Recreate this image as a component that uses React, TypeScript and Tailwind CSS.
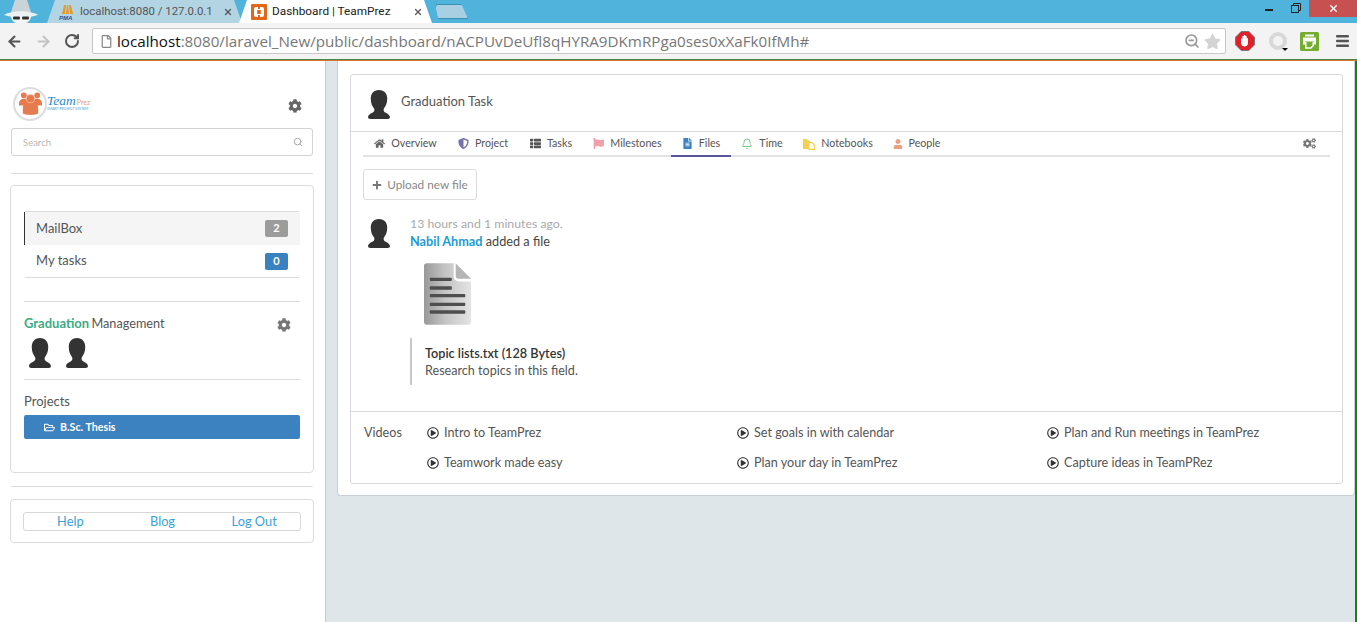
import React from "react";
import { Bell, Search, ArrowLeft, ArrowRight, RotateCw, ZoomOut, X } from "lucide-react";
import { FaHome, FaCog, FaCogs, FaPlus, FaFlag, FaUser, FaRegFolderOpen, FaRegPlayCircle, FaThList, FaFileAlt, FaShieldAlt, FaRegFile, FaStar } from "react-icons/fa";

function Avatar({ className = "" }: { className?: string }) {
  return (
    <svg viewBox="0 0 24 30" preserveAspectRatio="none" className={className}>
      <path fill="#333" d="M12 0C18 0 21 4 21 9C21 14 19 17 17.5 19C16.7 20.5 17 22 18 22.8C19.5 24 23.5 25 24 28C24 29.3 23 30 21.5 30L2.5 30C1 30 0 29.3 0 28C0.5 25 4.500 24 6 22.8C7 22 7.300 20.500 6.500 19C5 17 3 14 3 9C3 4 6 0 12 0Z" />
    </svg>
  );
}

function Tab({ active, title, icon, width }: { active?: boolean; title: string; icon: React.ReactNode; width: string }) {
  return (
    <div className={`flex items-center h-[23px] pl-2 pr-2 ${width} ${active ? "bg-white" : "bg-[#b3d4e3]"} [clip-path:polygon(0_100%,8px_0,calc(100%-8px)_0,100%_100%)]`}>
      <span className="w-4 h-4 shrink-0 ml-1 mr-[5px] flex items-center justify-center">{icon}</span>
      <span className={`whitespace-nowrap overflow-hidden flex-1 ${active ? "text-[11.800px] text-[#222]" : "text-[11.400px] text-[#555]"}`} style={{ fontFamily: "Roboto, sans-serif" }}>{title}</span>
      <X size={10} strokeWidth={3} className="text-[#555] shrink-0 ml-1 mr-[1px]" />
    </div>
  );
}

function NavTab({ icon, label, active, w }: { icon: React.ReactNode; label: string; active?: boolean; w: string }) {
  return (
    <div className={`flex items-center justify-center gap-[6px] h-[25px] ${w} text-[10.7px] text-[#555] -mb-[2px] border-b-2 ${active ? "border-[#5a5296]" : "border-transparent"}`}>
      {icon}
      <span>{label}</span>
    </div>
  );
}

function VideoLink({ label }: { label: string }) {
  return (
    <div className="flex items-center gap-[5px] h-[30px] text-[12.6px] text-[#555]">
      <FaRegPlayCircle size={12} className="text-[#333] shrink-0" />
      <span>{label}</span>
    </div>
  );
}

function Logo() {
  return (
    <div className="flex items-center h-[36px] -mt-[3px]">
      <div className="w-[34px] h-[34px] rounded-full border-2 border-[#ddd] flex items-center justify-center">
        <svg viewBox="0 0 26 24" className="w-[25px] h-[23px]">
          <g fill="#e67b4d">
            <circle cx="6" cy="3.500" r="3" />
            <circle cx="20" cy="3.500" r="3" />
            <path d="M1 12c0-3 2-5 5-5h14c3 0 5 2 5 5v2H1z" />
            <circle cx="13" cy="7" r="4.300" stroke="#f6c7ad" strokeWidth="0.800" />
            <path d="M5 16c0-3 3-4 8-4s8 1 8 4v6c0 1-3 2-8 2s-8-1-8-2z" />
          </g>
        </svg>
      </div>
      <div className="ml-0 -mt-[2px] flex flex-col">
        <div className="flex items-baseline leading-none">
          <span className="text-[13.500px] italic text-[#2a8ad0]" style={{ fontFamily: "'Liberation Serif', serif" }}>Team</span>
          <span className="text-[7px] ml-[1px] text-[#e8a070]">Prez</span>
        </div>
        <span className="text-[3.500px] leading-none text-[#4a9ad8] whitespace-nowrap">SMART PROJECT SYSTEM</span>
      </div>
    </div>
  );
}

function FileIcon() {
  return (
    <svg viewBox="0 0 50 64" className="w-[48px] h-[64px]">
      <defs>
        <linearGradient id="fg" x1="0" x2="1" y1="0" y2="0">
          <stop offset="0" stopColor="#999" />
          <stop offset="0.45" stopColor="#c4c4c4" />
          <stop offset="1" stopColor="#e4e4e4" />
        </linearGradient>
      </defs>
      <path fill="url(#fg)" d="M3 0h28l18 18v43a3 3 0 0 1-3 3H3a3 3 0 0 1-3-3V3a3 3 0 0 1 3-3z" />
      <path fill="#fff" d="M31 0v14a5 5 0 0 0 5 5h13v-2L33 0z" />
      <path fill="#b5b5b5" d="M33 0v13a3 3 0 0 0 3 3h13z" />
      <g fill="#4e4e4e">
        <rect x="6" y="15" width="23" height="3.500" rx="1" />
        <rect x="6" y="24" width="23" height="3.500" rx="1" />
        <rect x="6" y="32" width="37" height="3.500" rx="1" />
        <rect x="6" y="41" width="37" height="3.500" rx="1" />
        <rect x="6" y="49" width="37" height="3.500" rx="1" />
      </g>
    </svg>
  );
}

export default function App() {
  return (
    <div className="w-[1357px] h-[622px] overflow-hidden flex flex-col bg-[#dfe6e9] text-[#444]" style={{ fontFamily: "Lato, sans-serif" }}>
      {/* tab strip */}
      <div className="h-[23px] shrink-0 bg-[#4fb3dc] flex items-end relative">
        <div className="w-[51px] h-[23px] shrink-0 flex items-center justify-start overflow-hidden pl-[2px]">
          <svg viewBox="0 0 38 24" className="w-[38px] h-[24px]">
            <path fill="#c9d3d8" d="M9 12 L13 0 h12 l4 12z" />
            <path fill="#eef1f2" d="M2 15 C10 10 28 10 36 15 L28 17H10z" />
            <path fill="#f2f4f5" d="M9 16h20c0 5-4 8-10 8S9 21 9 16z" />
            <rect x="11" y="16.500" width="7" height="3" rx="1" fill="#333" />
            <rect x="20" y="16.500" width="7" height="3" rx="1" fill="#333" />
          </svg>
        </div>
        <div className="flex items-end -ml-[4px]">
          <Tab width="w-[195px]" title="localhost:8080 / 127.0.0.1" icon={
            <svg viewBox="0 0 16 16" className="w-4 h-4"><path fill="#e69a1f" d="M3 10 5 1h2L6 10zM7 10l1-9h1l1 9zM11 10 10 1h2l2 9z" /><text x="0" y="15.500" fontSize="6" fontStyle="italic" fontWeight="700" fill="#33508a" fontFamily="Liberation Sans">PMA</text></svg>
          } />
          <div className="-ml-[3px]">
            <Tab active width="w-[193px]" title="Dashboard | TeamPrez" icon={
              <svg viewBox="0 0 16 16" className="w-4 h-4">
                <rect width="16" height="16" rx="1" fill="#e2671b" />
                <rect x="3" y="3" width="10" height="10" rx="2" fill="#fff" />
                <rect x="6.200" y="6" width="3.600" height="4" fill="#e2671b" />
                <rect x="7" y="3" width="2" height="2" fill="#e2671b" />
                <rect x="7" y="11" width="2" height="2" fill="#e2671b" />
              </svg>
            } />
          </div>
          <div className="ml-[3px] w-[33px] h-[15px] mb-[4px] bg-[#a9d0e2] border border-[#3d90b2] rounded-t-[3px] [clip-path:polygon(0_0,80%_0,100%_100%,10%_100%)]" />
        </div>
        <div className="ml-auto flex items-start self-start h-[17px]">
          <div className="w-[26px] h-[15px] flex items-center justify-center"><span className="w-[8px] h-[2px] mt-[4px] bg-[#222]" /></div>
          <div className="w-[27px] h-[15px] flex items-center justify-center">
            <svg viewBox="0 0 10 10" className="w-[10px] h-[10px]" fill="none" stroke="#222" strokeWidth="1">
              <rect x="0.500" y="2.500" width="7" height="7" />
              <path d="M2.500 2.500v-2h7v7h-2" />
            </svg>
          </div>
          <div className="w-[48px] h-[17px] bg-[#c75050] flex items-center justify-center"><X size={11} strokeWidth={3} className="text-white" /></div>
        </div>
      </div>
      {/* toolbar */}
      <div className="h-[37px] shrink-0 bg-[#f3f3f3] flex items-center border-b border-[#3f8a3a]">
        <ArrowLeft size={17} strokeWidth={3} className="text-[#555] ml-[6px]" />
        <ArrowRight size={17} strokeWidth={3} className="text-[#c4c4c4] ml-[12px]" />
        <RotateCw size={16} strokeWidth={3} className="text-[#555] ml-[12px]" />
        <div className="ml-[12px] w-[1134px] h-[26px] bg-white border border-[#c8c8c8] rounded-[2px] flex items-center pl-[7px] pr-[4px]">
          <FaRegFile size={13} className="text-[#888] shrink-0" />
          <span className="ml-[4px] text-[15.200px] whitespace-nowrap" style={{ fontFamily: "'Open Sans', sans-serif" }}>
            <span className="text-[#111]">localhost</span><span className="text-[#777]">:8080/laravel_New/public/dashboard/nACPUvDeUfl8qHYRA9DKmRPga0ses0xXaFk0IfMh#</span>
          </span>
          <span className="ml-auto flex items-center gap-[4px] shrink-0">
            <ZoomOut size={16} strokeWidth={2.500} className="text-[#999]" />
            <FaStar size={17} className="text-[#d4d4d4]" />
          </span>
        </div>
        <svg viewBox="0 0 20 20" className="ml-[9px] w-[20px] h-[20px] shrink-0">
          <path fill="#e1202a" stroke="#777" strokeWidth="1" d="M6.200 .5h7.600l5.700 5.700v7.600l-5.700 5.700H6.200L.5 13.800V6.200z" />
          <path fill="#fff" d="M6 8c0-1 1.400-1 1.400 0V5.500c0-1 1.400-1 1.400 0V4.500c0-1 1.500-1 1.500 0v1c0-1 1.400-1 1.400 0v2c0-.8 1.300-.8 1.300 0v4.500c0 2-1.500 3.500-3.500 3.500S6 14 6 12z" />
        </svg>
        <span className="ml-[14px] w-[18px] h-[18px] rounded-full border-[4px] border-[#d8d8d8] shrink-0 relative">
          <span className="absolute -right-[5px] -bottom-[5px] w-0 h-0 border-x-[3px] border-x-transparent border-t-[3px] border-t-black" />
        </span>
        <svg viewBox="0 0 19 19" className="ml-[13px] w-[19px] h-[19px] shrink-0">
          <rect width="19" height="19" rx="1.500" fill="#74ad2f" />
          <path fill="#fff" d="M5 2.500h9v2H5zM3 5.500h13v7h-2v-3H5v3H3z" />
          <path fill="none" stroke="#fff" strokeWidth="1.500" d="M5.800 10v6h5l2.500-2.500V10" />
        </svg>
        <svg viewBox="0 0 13 12" className="ml-[17px] w-[13px] h-[12px] shrink-0">
          <g fill="#555">
            <rect width="13" height="2.500" rx="1" />
            <rect y="4.700" width="13" height="2.500" rx="1" />
            <rect y="9.400" width="13" height="2.500" rx="1" />
          </g>
        </svg>
      </div>
      {/* body */}
      <div className="flex-1 min-h-0 flex border-t border-[#e2703a] relative">
        <aside className="w-[326px] shrink-0 h-full bg-white border-r border-[#c5ccd0] px-[10px] pt-[26px]">
          <div className="flex items-center justify-between pl-[3px] pr-[3px] h-[36px]">
            <Logo />
            <FaCog size={14} className="text-[#666] mr-[10px] mt-[1px]" />
          </div>
          <div className="mt-[5px] ml-[1px] w-[302px] h-[28px] border border-[#d3d3d3] rounded-[3px] flex items-center justify-between pl-[11px] pr-[9px]">
            <span className="text-[9.500px] text-[#b5b5b5] mt-[2px]">Search</span>
            <Search size={10} className="text-[#999]" />
          </div>
          <div className="mt-[17px] ml-[1px] w-[302px] h-px bg-[#dcdcdc]" />
          <div className="mt-[11px] w-[304px] h-[288px] border border-[#dcdcdc] rounded-[4px] px-[13px] pt-[25px]">
            <div className="border-b border-t border-[#dcdcdc] rounded-[2px]">
              <div className="h-[33px] bg-[#f5f5f5] border-l border-l-[#333] flex items-center justify-between pl-[11px] pr-[12px] text-[13px] text-[#555]">
                <span>MailBox</span>
                <span className="w-[23px] h-[17px] rounded-[2px] bg-[#9c9c9c] text-white text-[11px] font-bold flex items-center justify-center">2</span>
              </div>
              <div className="h-[32px] flex items-center justify-between pl-[12px] pr-[12px] text-[13px] text-[#555]">
                <span className="-mt-[1px]">My tasks</span>
                <span className="w-[23px] h-[17px] rounded-[2px] bg-[#3a81c0] text-white text-[11px] font-bold flex items-center justify-center">0</span>
              </div>
            </div>
            <div className="mt-[23px] border-t border-[#dcdcdc] pt-[12px] flex justify-between pr-[9px]">
              <span className="text-[13px] leading-[18px]"><span className="font-bold text-[#3cab85]">Graduation</span> <span className="text-[#555] text-[12.700px] -ml-[1px]">Management</span></span>
              <FaCog size={14} className="text-[#777] mt-[4px]" />
            </div>
            <div className="flex gap-[15px] mt-[6px] pl-[5px]">
              <Avatar className="w-[22px] h-[30px]" />
              <Avatar className="w-[22px] h-[30px]" />
            </div>
            <div className="mt-[11px] border-t border-[#dcdcdc] pt-[12px] text-[13px] leading-[18px] text-[#555]">Projects</div>
            <div className="mt-[5px] h-[24px] bg-[#3c82c0] rounded-[2px] flex items-center pl-[20px] gap-[5px] text-white text-[10.700px] font-bold">
              <FaRegFolderOpen size={11} />
              <span>B.Sc. Thesis</span>
            </div>
          </div>
          <div className="mt-[13px] ml-[1px] w-[302px] h-px bg-[#dcdcdc]" />
          <div className="mt-[12px] w-[304px] h-[44px] border border-[#dcdcdc] rounded-[4px] px-[12px] pt-[12px]">
            <div className="h-[19px] border border-[#d8d8d8] rounded-[3px] flex items-center text-[12.800px] text-[#3ca0e0]">
              <span className="w-[93px] text-center">Help</span>
              <span className="w-[92px] text-center">Blog</span>
              <span className="w-[92px] text-center">Log Out</span>
            </div>
          </div>
        </aside>
        <main className="flex-1 min-w-0 pl-[11px]">
          <div className="w-[1018px] h-[435px] bg-white border border-t-0 border-[#c8ced2] rounded-b-[4px] pl-[12px] pr-[6px] pt-[13px]">
            <div className="w-[993px] h-[410px] border border-[#d8d8d8] rounded-[3px] flex flex-col">
              <div className="h-[57px] flex items-center pl-[17px] gap-[11px] text-[13px] text-[#555] border-b border-[#d8d8d8] shrink-0">
                <Avatar className="w-[22px] h-[29px] mt-[3px]" />
                <span className="-mt-[3px]">Graduation Task</span>
              </div>
              <div className="mx-[12px] h-[25px] flex items-center border-b-2 border-[#e3e3e3] shrink-0">
                <NavTab w="w-[85px]" icon={<FaHome size={11} className="text-[#666]" />} label="Overview" />
                <NavTab w="w-[70px]" icon={<FaShieldAlt size={11} className="text-[#7873a8]" />} label="Project" />
                <NavTab w="w-[66px]" icon={<FaThList size={11} className="text-[#555]" />} label="Tasks" />
                <NavTab w="w-[87px]" icon={<FaFlag size={11} className="text-[#f0a0a8]" />} label="Milestones" />
                <NavTab active w="w-[60px]" icon={<FaFileAlt size={11} className="text-[#3c82c0]" />} label="Files" />
                <NavTab w="w-[62px]" icon={<Bell size={12} className="text-[#7dc98c]" />} label="Time" />
                <NavTab w="w-[90px]" icon={
                  <svg viewBox="0 0 12 12" className="w-[12px] h-[12px]">
                    <path fill="#f5d04e" d="M0 1h4l1 1.500h2V5h-1v6H0z" />
                    <path fill="#fff" stroke="#f5d04e" strokeWidth="1.200" d="M6 4.500h3l2.400 2.400v4.500H6z" />
                  </svg>
                } label="Notebooks" />
                <NavTab w="w-[67px]" icon={<FaUser size={10} className="text-[#e9a080]" />} label="People" />
                <FaCogs size={13} className="ml-auto mr-[14px] text-[#777]" />
              </div>
              <div className="flex-1 min-h-0 pl-[12px] pt-[12px]">
                <div className="w-[114px] h-[31px] border border-[#dcdcdc] rounded-[3px] flex items-center justify-center gap-[5px] text-[11.800px] text-[#888]">
                  <FaPlus size={10} className="text-[#777]" />
                  <span>Upload new file</span>
                </div>
                <div className="mt-[16px] flex">
                  <Avatar className="w-[22px] h-[29px] mt-[3px] ml-[5px] shrink-0" />
                  <div className="ml-[20px]">
                    <div className="text-[12.300px] leading-[16px] text-[#aaa]">13 hours and 1 minutes ago.</div>
                    <div className="text-[12.700px] leading-[17px] pt-[1px] h-[18px] box-content text-[#444] -mb-[1px]"><span className="font-bold text-[#1a9bd8]">Nabil Ahmad</span> added a file</div>
                    <div className="mt-[12px] ml-[14px] h-[64px]"><FileIcon /></div>
                    <div className="mt-[12px] border-l-2 border-[#c8c8c8] pl-[13px] leading-[17px] h-[47px] pt-[7px]">
                      <div className="text-[#333] text-[12.700px] font-semibold">Topic lists.txt (128 Bytes)</div>
                      <div className="text-[#555] text-[12.600px]">Research topics in this field.</div>
                    </div>
                  </div>
                </div>
              </div>
              <div className="h-[72px] border-t border-[#d8d8d8] shrink-0 flex pl-[13px] pt-[6px]">
                <div className="w-[63px] text-[12.600px] text-[#555] leading-[30px]">Videos</div>
                <div className="w-[310px]">
                  <VideoLink label="Intro to TeamPrez" />
                  <VideoLink label="Teamwork made easy" />
                </div>
                <div className="w-[310px]">
                  <VideoLink label="Set goals in with calendar" />
                  <VideoLink label="Plan your day in TeamPrez" />
                </div>
                <div>
                  <VideoLink label="Plan and Run meetings in TeamPrez" />
                  <VideoLink label="Capture ideas in TeamPRez" />
                </div>
              </div>
            </div>
          </div>
        </main>
        <div className="absolute right-0 top-0 bottom-0 w-[2px] bg-[#0a8a0a]" />
      </div>
    </div>
  );
}
